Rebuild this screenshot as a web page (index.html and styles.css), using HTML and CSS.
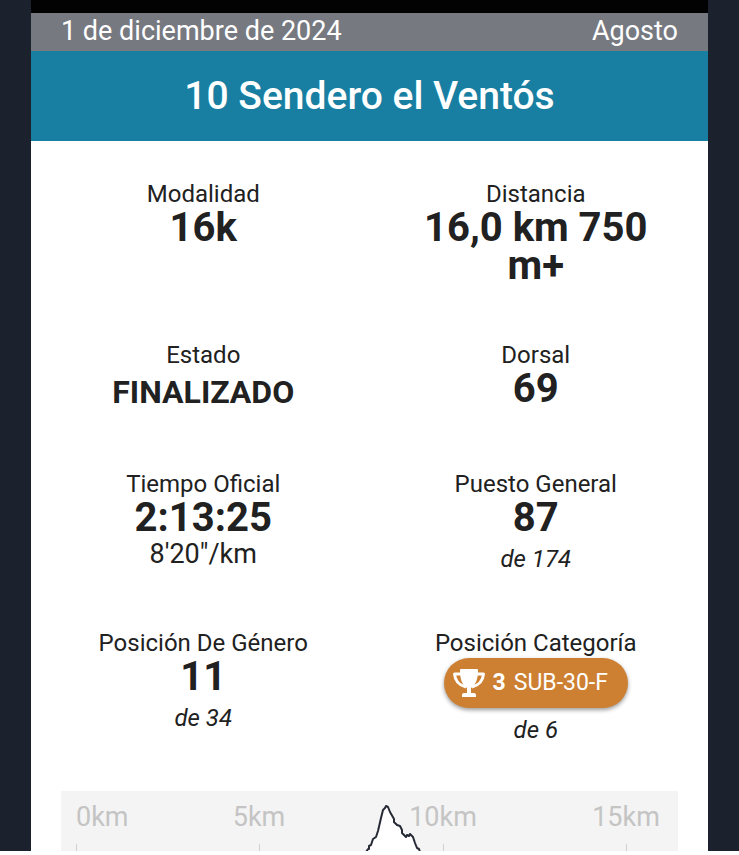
FILE: index.html
```html
<!DOCTYPE html>
<html lang="es">
<head>
    <meta charset="UTF-8">
    <meta name="viewport" content="width=device-width, initial-scale=1.0">
    <title>10 Sendero el Ventós</title>
    <link rel="stylesheet" href="styles.css">
</head>
<body>

    <div class="page">
        <main class="race">

            <!-- Fecha y localidad -->
            <div class="race-info">
                <span>1 de diciembre de 2024</span>
                <span>Agosto</span>
            </div>

            <h1 class="race-title">10 Sendero el Ventós</h1>

            <!-- Resultados del corredor -->
            <dl class="results">
                <div class="item">
                    <dt>Modalidad</dt>
                    <dd class="value">16k</dd>
                </div>
                <div class="item">
                    <dt>Distancia</dt>
                    <dd class="value">16,0 km 750 m+</dd>
                </div>
                <div class="item">
                    <dt>Estado</dt>
                    <dd class="value status">FINALIZADO</dd>
                </div>
                <div class="item">
                    <dt>Dorsal</dt>
                    <dd class="value">69</dd>
                </div>
                <div class="item">
                    <dt>Tiempo Oficial</dt>
                    <dd class="value">2:13:25</dd>
                    <dd class="pace">8'20"/km</dd>
                </div>
                <div class="item">
                    <dt>Puesto General</dt>
                    <dd class="value">87</dd>
                    <dd class="total">de 174</dd>
                </div>
                <div class="item">
                    <dt>Posición De Género</dt>
                    <dd class="value">11</dd>
                    <dd class="total">de 34</dd>
                </div>
                <div class="item">
                    <dt>Posición Categoría</dt>
                    <dd class="badge">
                        <svg class="trophy" viewBox="0 0 32 28" aria-hidden="true">
                            <path d="M8 5H1.500C2 11 5 16 13 18M24 5h6.500C30 11 27 16 19 18" fill="none" stroke="#fff" stroke-width="3" stroke-linejoin="round"/>
                            <path d="M7 1q0-1 1-1h16q1 0 1 1c0 9-2 15-7 18v5h3q2 0 2 2v2H9v-2q0-2 2-2h3v-5C9 16 7 10 7 1z" fill="#fff"/>
                        </svg>
                        <strong>3</strong>
                        <span>SUB-30-F</span>
                    </dd>
                    <dd class="total">de 6</dd>
                </div>
            </dl>

            <!-- Perfil de altitud -->
            <svg class="profile" viewBox="0 0 617 60" role="img" aria-label="Perfil de altitud">
                <path class="tick" d="M15.5 53V60M198.5 53V60M382.5 53V60M565.5 53V60"/>
                <text x="15" y="35">0km</text>
                <text x="198" y="35" text-anchor="middle">5km</text>
                <text x="382" y="35" text-anchor="middle">10km</text>
                <text x="565" y="35" text-anchor="middle">15km</text>
                <path class="line" d="M305 61L307 58L308 58L308 55L310 54L312 48L315 46L317 40L320 27L322 19L324 17L325 15L327 16L329 21L333 28L333 31L336 34L339 35L341 39L341 42L345 46L346 44L348 45L349 43L352 46L354 52L356 57L358 58L359 61"/>
            </svg>

        </main>
    </div>

</body>
</html>
```

FILE: styles.css
```css
body {
    font-family: Roboto, "Liberation Sans", sans-serif;
    background-color: #fff;
    color: #212121;
    margin: 0;
}
.page {
    background-color: #1b212d;
    padding: 0 31px;
    margin-bottom: 4px;
}
.race {
    background-color: #fff;
    border-top: 13px solid #020202;
}
.race-info {
    display: flex;
    justify-content: space-between;
    padding: 0 30px 2px;
    background-color: #777981;
    color: #fff;
    font-size: 27px;
    line-height: 36px;
}
.race-title {
    margin: 0;
    background-color: #187fa2;
    color: #fff;
    font-size: 39px;
    font-weight: 500;
    line-height: 90px;
    text-align: center;
}
.results {
    display: grid;
    grid-template-columns: 1fr 1fr;
    row-gap: 57px;
    margin: 0;
    padding: 40px 6px 47px;
    text-align: center;
}
.item {
    padding: 0 40px;
}
dt {
    font-size: 24px;
    line-height: 26px;
}
dd {
    margin: 0;
}
.value {
    padding-top: 2px;
    font-size: 40px;
    font-weight: 700;
    line-height: 38px;
}
.status {
    font-size: 32px;
    line-height: 44px;
}
.pace {
    margin-top: 2px;
    font-size: 27px;
    line-height: 30px;
}
.total {
    margin-top: 8px;
    font-size: 24px;
    font-style: italic;
    line-height: 28px;
}
.badge {
    display: inline-flex;
    align-items: center;
    gap: 8px;
    margin-top: 2px;
    padding: 0 20px 0 9px;
    border-radius: 25px;
    background-color: #cd7f32;
    box-shadow: 0 2px 4px rgba(0, 0, 0, 0.4);
    color: #fff;
    font-size: 23px;
    line-height: 50px;
}
.trophy {
    width: 32px;
    height: 28px;
}
.profile {
    display: block;
    margin: 0 30px;
    background-color: #f4f4f4;
}
.profile text {
    font-size: 27px;
    fill: #c4c4c4;
}
.tick {
    stroke: #d0d0d0;
}
.line {
    fill: #fff;
    stroke: #262a35;
    stroke-width: 2;
    stroke-linejoin: round;
}
```
